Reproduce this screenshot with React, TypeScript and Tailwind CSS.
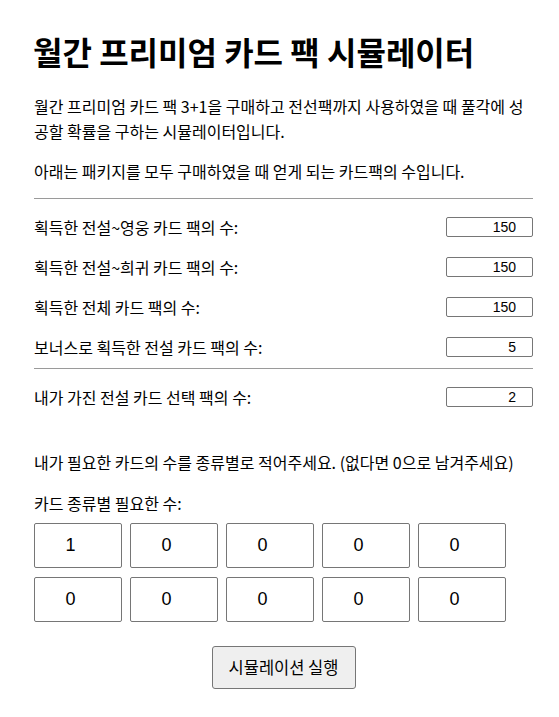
import React from "react";

const KR = "font-['Noto_Sans_CJK_KR','Noto_Sans',sans-serif]";
const AR = "font-['Liberation_Sans',Arial,sans-serif]";

function Row({ label, value }: { label: string; value: string }) {
  return (
    <div className="flex items-center justify-between h-[20px]">
      <span className="text-[16px] leading-[20px]">{label}</span>
      <input
        type="text"
        defaultValue={value}
        className={`${AR} w-[87px] h-[20px] border border-[#767676] rounded-[2px] text-[14px] text-right pr-[16px] pl-[2px] text-black outline-none`}
      />
    </div>
  );
}

export default function App() {
  const grid = ["1", "0", "0", "0", "0", "0", "0", "0", "0", "0"];
  return (
    <div className={`${KR} bg-white text-black min-h-[717px] pt-[31px]`}>
      <div className="ml-[34px] w-[499px] flex flex-col">
        <h1 className="text-[32px] font-bold leading-[40px] -ml-[1px]">
          월간 프리미엄 카드 팩 시뮬레이터
        </h1>
        <p className="mt-[23px] text-[16px] leading-[25px]">
          월간 프리미엄 카드 팩 3+1을 구매하고 전선팩까지 사용하였을 때 풀각에 성공할 확률을 구하는 시뮬레이터입니다.
        </p>
        <p className="mt-[15px] text-[16px] leading-[25px]">
          아래는 패키지를 모두 구매하였을 때 얻게 되는 카드팩의 수입니다.
        </p>
        <div className="mt-[14px] h-px bg-[#9a9a9a]" />
        <div className="mt-[18px] flex flex-col gap-[20px]">
          <Row label="획득한 전설~영웅 카드 팩의 수:" value="150" />
          <Row label="획득한 전설~희귀 카드 팩의 수:" value="150" />
          <Row label="획득한 전체 카드 팩의 수:" value="150" />
          <Row label="보너스로 획득한 전설 카드 팩의 수:" value="5" />
        </div>
        <div className="mt-[11px] h-px bg-[#9a9a9a]" />
        <div className="mt-[18px]">
          <Row label="내가 가진 전설 카드 선택 팩의 수:" value="2" />
        </div>
        <p className="mt-[43px] text-[16px] leading-[25px]">
          내가 필요한 카드의 수를 종류별로 적어주세요. (없다면 0으로 남겨주세요)
        </p>
        <p className="mt-[16px] text-[16px] leading-[25px]">카드 종류별 필요한 수:</p>
        <div className="mt-[7px] grid grid-cols-[repeat(5,88px)] gap-x-[8px] gap-y-[9px]">
          {grid.map((v, i) => (
            <input
              key={i}
              type="text"
              defaultValue={v}
              className={`${AR} w-[88px] h-[45px] border border-[#767676] rounded-[2px] text-[18px] text-center pl-[2px] pr-[17px] text-black outline-none`}
            />
          ))}
        </div>
        <div className="mt-[24px] flex justify-center">
          <button className="w-[144px] h-[43px] bg-[#efefef] border border-[#767676] rounded-[3px] text-[16.5px] text-black">
            시뮬레이션 실행
          </button>
        </div>
      </div>
    </div>
  );
}
